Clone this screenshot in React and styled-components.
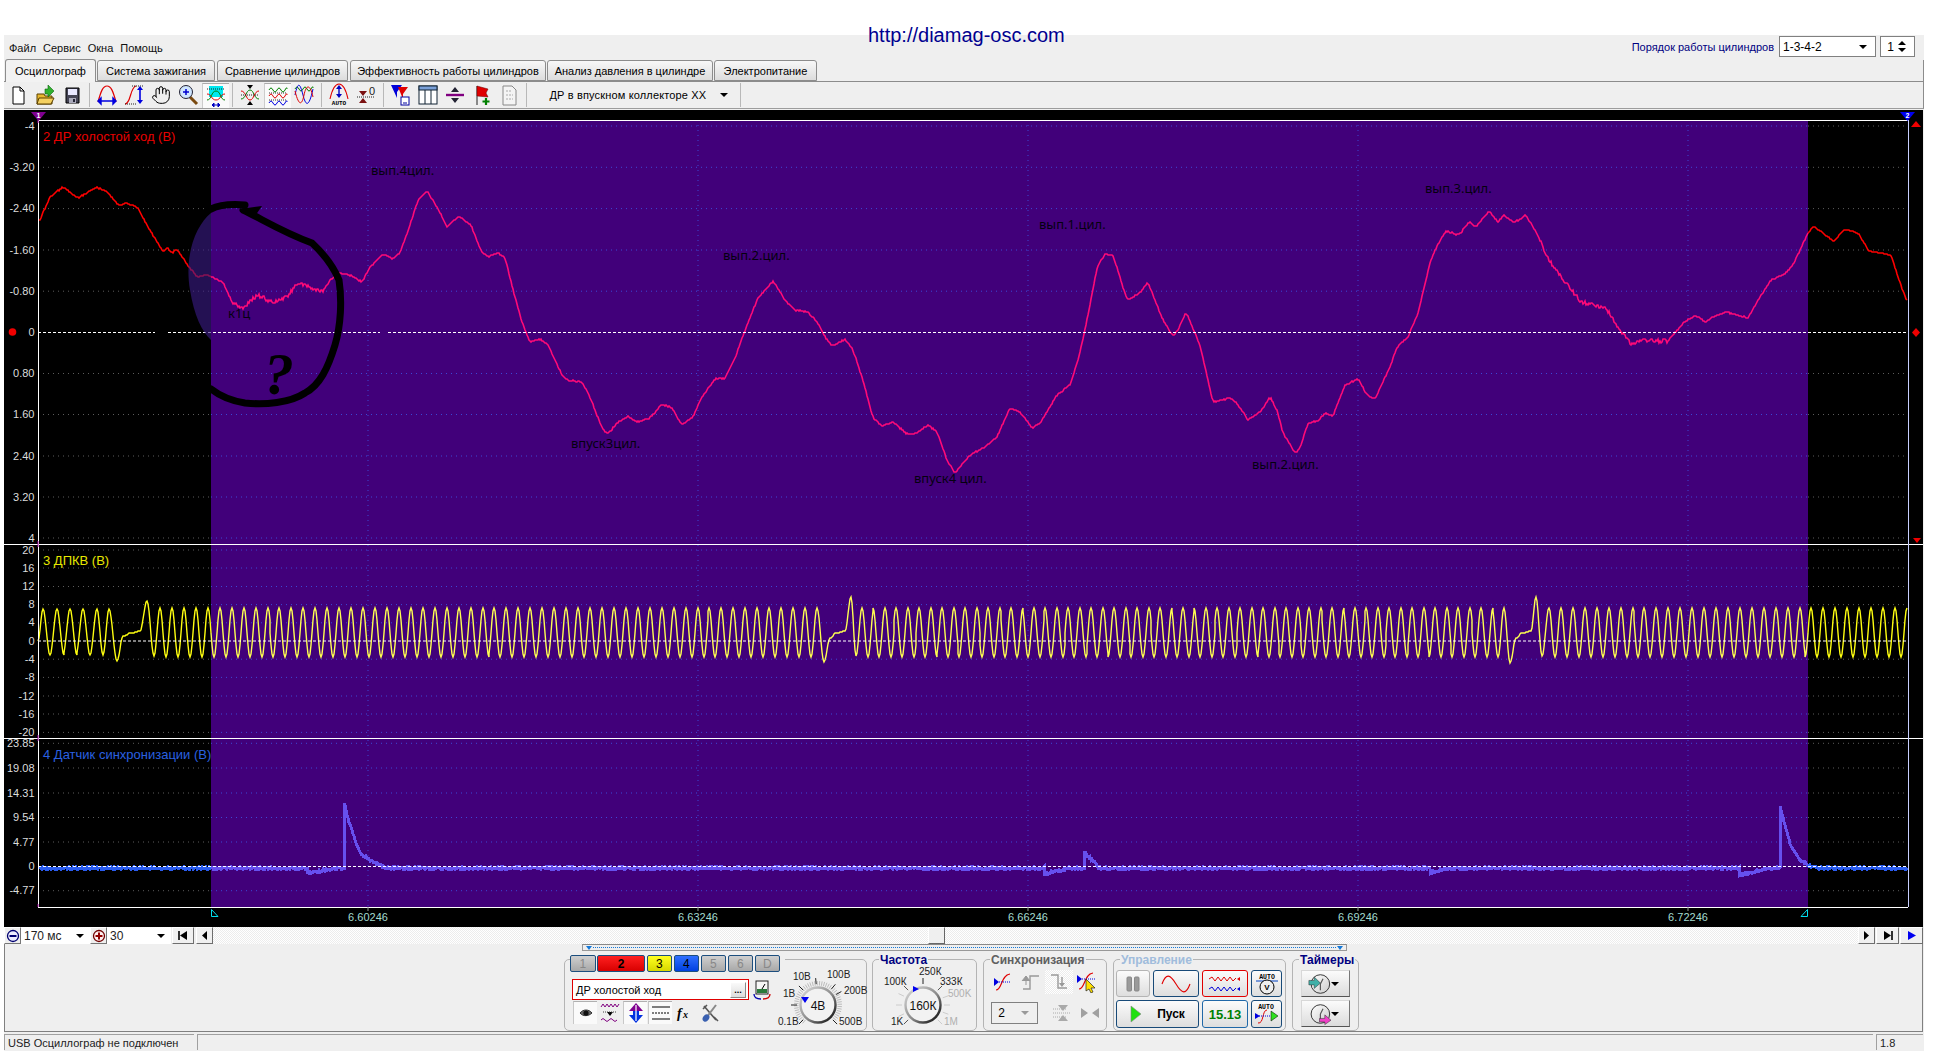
import React from 'react';
import styled, { createGlobalStyle } from 'styled-components';
import { Hand } from 'lucide-react';

const Global = createGlobalStyle`
  html, body { margin: 0; padding: 0; background: #fff; }
  body { font-family: "Liberation Sans", Arial, sans-serif; font-size: 11px; color: #000; overflow: hidden; }
  * { box-sizing: border-box; }
`;

/* ---------- trace helpers ---------- */
function makeRng(seed) {
  let s = seed;
  return () => { s = (s * 16807) % 2147483647; return s / 2147483647 - 0.5; };
}
function sampleLinear(knots) {
  const out = [];
  for (let i = 0; i < knots.length - 1; i++) {
    const [x0, y0] = knots[i]; const [x1, y1] = knots[i + 1];
    if (x1 === x0) { out.push([x0, y0]); continue; }
    for (let x = x0; x < x1; x++) out.push([x, y0 + (y1 - y0) * (x - x0) / (x1 - x0)]);
  }
  out.push(knots[knots.length - 1]);
  return out;
}
function sampleCos(knots) {
  const out = [];
  for (let i = 0; i < knots.length - 1; i++) {
    const [x0, y0] = knots[i]; const [x1, y1] = knots[i + 1];
    const n = Math.max(2, Math.round(x1 - x0));
    for (let k = 0; k < n; k++) {
      const t = k / n;
      out.push([x0 + (x1 - x0) * t, y0 + (y1 - y0) * (1 - Math.cos(Math.PI * t)) / 2]);
    }
  }
  out.push(knots[knots.length - 1]);
  return out;
}
function boxSmooth(pts, r) {
  return pts.map((p, i) => {
    let sum = 0, n = 0;
    for (let j = Math.max(0, i - r); j <= Math.min(pts.length - 1, i + r); j++) { sum += pts[j][1]; n++; }
    return [p[0], sum / n];
  });
}
const toStr = pts => pts.map(p => `${p[0]},${p[1]}`).join(' ');
const range = (pts, a, b) => pts.filter(p => p[0] >= a && p[0] <= b);

const redKnots = [[39,222],[50,197],[63,187],[78,198],[97,187],[108,193],[118,205],[126,203],[137,207],[147,225],[157,242],[163,252],[167,248],[172,253],[177,249],[187,264],[197,277],[207,275],[223,282],[232,302],[242,308],[258,295],[273,303],[287,297],[297,283],[322,292],[332,278],[340,273],[350,275],[362,282],[370,267],[383,254],[393,259],[400,253],[410,225],[418,200],[427,191],[437,207],[447,227],[459,216],[471,225],[482,253],[488,257],[498,253],[505,258],[513,290],[522,322],[530,342],[540,339],[548,345],[563,377],[567,380],[582,382],[590,397],[602,428],[608,434],[617,423],[628,416],[638,422],[650,418],[662,404],[672,408],[682,425],[693,417],[702,397],[715,379],[725,378],[735,358],[747,325],[758,298],[773,281],[785,300],[795,310],[808,312],[817,322],[827,340],[833,346],[845,339],[853,350],[862,377],[873,418],[882,426],[893,422],[907,434],[915,434],[928,425],[937,432],[947,460],[955,473],[970,455],[985,447],[997,437],[1010,408],[1020,412],[1032,428],[1040,423],[1057,395],[1070,385],[1078,360],[1085,330],[1097,268],[1105,254],[1113,255],[1127,300],[1140,293],[1148,282],[1162,318],[1173,336],[1178,330],[1186,312],[1200,345],[1213,402],[1230,398],[1237,403],[1248,420],[1262,410],[1270,397],[1277,410],[1283,433],[1295,453],[1300,448],[1308,423],[1318,421],[1325,413],[1333,416],[1345,385],[1358,379],[1367,395],[1375,399],[1390,367],[1397,347],[1408,337],[1418,313],[1430,263],[1436,248],[1446,231],[1459,235],[1469,222],[1476,227],[1489,211],[1498,222],[1504,215],[1514,223],[1526,215],[1536,232],[1549,260],[1569,287],[1581,302],[1606,308],[1618,328],[1631,344],[1641,340],[1668,341],[1684,322],[1696,316],[1706,322],[1713,317],[1726,312],[1748,318],[1758,300],[1771,280],[1786,273],[1794,263],[1808,233],[1813,226],[1834,241],[1844,229],[1858,233],[1869,251],[1891,255],[1898,277],[1907,302]];

function buildRed() {
  const rng = makeRng(12345);
  const base = boxSmooth(sampleLinear(redKnots), 1);
  return base.map(([x, y]) => {
    const amp = (x > 232 && x < 325) || (x > 1540 && x < 1670) ? 4 : 1.2;
    return [x, Math.round(y + rng() * amp)];
  });
}
function buildYellow() {
  const K = [[38, 641]];
  const hi = 608, lo = 657;
  [43, 57, 70, 83, 97, 109].forEach((p, i, a) => {
    K.push([p, hi + 1]);
    if (i < a.length - 1) K.push([(p + a[i + 1]) / 2, lo - 2]);
  });
  K.push([117, 661], [123, 636], [131, 633], [140, 631], [147, 601], [154, 656]);
  const run = (start, end, n) => {
    const per = (end - start) / n;
    for (let i = 0; i <= n; i++) {
      const p = start + per * i;
      K.push([p, hi]);
      if (i < n) K.push([p + per / 2, lo]);
    }
  };
  run(160, 817, 55);
  K.push([824, 662], [830, 638], [836, 633], [845, 631], [851, 597], [856, 656]);
  run(862, 1504, 56);
  K.push([1510, 663], [1516, 638], [1522, 633], [1531, 631], [1536, 597], [1542, 656]);
  run(1549, 1906.9, 30);
  return sampleCos(K).map(([x, y]) => [Math.round(x), Math.round(y)]);
}
function buildBlue() {
  const knots = [[38,868],[307,868],[307,873],[335,868],[344,868],[344,802],[349,822],[355,840],[360,853],[370,860],[382,866],[388,868],[1044,868],[1044,874],[1070,868],[1084,868],[1084,852],[1090,858],[1097,864],[1098,868],[1430,868],[1430,873],[1445,868],[1739,868],[1739,875],[1770,868],[1780,868],[1780,806],[1785,826],[1791,846],[1800,860],[1810,866],[1820,868],[1907,868]];
  const rng = makeRng(777);
  return sampleLinear(knots).map(([x, y]) => [x, Math.round(y + rng() * 2)]);
}
const RED = buildRed(), YEL = buildYellow(), BLU = buildBlue();

const SEL_L = 211, SEL_R = 1808, AX_L = 38, AX_R = 1908;
const GRID_X = [368, 698, 1028, 1358, 1688];
const P1 = [['-4',126],['-3.20',167.3],['-2.40',208.6],['-1.60',250],['-0.80',291.2],['0',332.5],['0.80',373.5],['1.60',414.5],['2.40',456],['3.20',497],['4',538]];
const P2 = [['20',550],['16',568],['12',586.5],['8',604.6],['4',622.8],['0',641],['-4',659.2],['-8',677.4],['-12',696],['-16',714],['-20',732.4]];
const P3 = [['23.85',743.3],['19.08',768],['14.31',793],['9.54',817.5],['4.77',842],['0',866.5],['-4.77',890.7]];
const ZEROS = [332.5, 641, 866.5];

const NOTES = [
  ['вып.4цил.', 371, 175], ['вып.2.цил.', 723, 260], ['впуск3цил.', 571, 448], ['впуск4 цил.', 914, 483],
  ['вып.1.цил.', 1039, 229], ['вып.2.цил.', 1252, 469], ['вып.3.цил.', 1425, 193], ['к1ц', 228, 318],
];

/* ---------- page structure ---------- */
const Page = styled.div`
  position: relative;
  width: 1936px;
  height: 1056px;
  padding-top: 35px;
  background: #fff;
`;
const SiteLink = styled.div`
  position: absolute;
  left: 868px;
  top: 24px;
  font-size: 20px;
  line-height: 22px;
  color: #000090;
  white-space: nowrap;
`;
const AppWindow = styled.div`
  margin-left: 4px;
  width: 1920px;
  height: 1016px;
  display: flex;
  flex-direction: column;
  background: #efefef;
`;
const TopRow = styled.div`
  height: 25px;
  display: flex;
  align-items: flex-start;
  padding: 0 9px 0 5px;
`;
const Menu = styled.nav`
  display: flex;
  gap: 7px;
  line-height: 26px;
  font-size: 11px;
  color: #111;
`;
const CylinderControls = styled.div`
  margin-left: auto;
  display: flex;
  gap: 4px;
  align-items: center;
  height: 21px;
  margin-top: 1px;
`;
const CylinderLabel = styled.span`
  color: #000080;
  font-size: 11px;
  margin-right: 1px;
`;
const SelectBox = styled.div`
  position: relative;
  width: ${p => p.$w}px;
  height: ${p => p.$h || 21}px;
  margin-left: ${p => p.$ml || 0}px;
  border: 1px solid #808080;
  background: ${p => p.$bg || '#fff'};
  color: ${p => p.$fg || '#000'};
  display: flex;
  align-items: center;
  padding: 0 3px;
  font-size: ${p => p.$fs || 11}px;
`;
const DownCaret = styled.i`
  margin-left: auto;
  margin-right: ${p => p.$mr || 5}px;
  width: 0;
  height: 0;
  border-left: 4px solid transparent;
  border-right: 4px solid transparent;
  border-top: 4px solid ${p => p.$c || '#000'};
`;
const UpCaret = styled.i`
  width: 0;
  height: 0;
  border-left: 4px solid transparent;
  border-right: 4px solid transparent;
  border-bottom: 4px solid #000;
`;
const SpinArrows = styled.span`
  margin-left: auto;
  margin-right: 5px;
  display: flex;
  flex-direction: column;
  align-items: center;
  gap: 3px;
  & > i:last-child { margin: 0; }
`;
const TabStrip = styled.div`
  height: 22px;
  display: flex;
  align-items: flex-end;
  gap: 1px;
  padding-left: 1px;
  border-bottom: 1px solid #8c8c8c;
  border-right: 1px solid #8c8c8c;
`;
const Tab = styled.div`
  width: ${p => p.$w}px;
  height: ${p => (p.$active ? 23 : 21)}px;
  margin-bottom: ${p => (p.$active ? -1 : 0)}px;
  margin-right: ${p => p.$mr || 0}px;
  display: flex;
  align-items: center;
  justify-content: center;
  border: 1px solid #8c8c8c;
  border-bottom: ${p => (p.$active ? 'none' : '1px solid #8c8c8c')};
  border-radius: 3px 3px 0 0;
  background: ${p => (p.$active ? '#f2f2f2' : 'linear-gradient(#f8f8f8, #dcdcdc)')};
  font-size: 11px;
  white-space: nowrap;
  position: relative;
`;
const Toolbar = styled.div`
  height: 27px;
  margin-bottom: 1px;
  display: flex;
  align-items: center;
  padding-left: 0.5px;
  border-bottom: 1px solid #9c9c9c;
  border-right: 1px solid #8c8c8c;
`;
const ToolButton = styled.div`
  width: 27px;
  height: 25px;
  display: flex;
  align-items: center;
  justify-content: center;
  background: ${p => (p.$on ? '#fafafa' : 'transparent')};
  border-top: ${p => (p.$on ? '1px solid #aaa' : 'none')};
  border-left: ${p => (p.$on ? '1px solid #ccc' : 'none')};
`;
const ToolSep = styled.div`
  width: 1px;
  height: 24px;
  margin: 0 3.5px;
  background: #b8b8b8;
`;
const PresetCombo = styled.div`
  width: 206px;
  display: flex;
  align-items: center;
  padding-left: 19px;
  font-size: 11px;
  letter-spacing: 0.15px;
  white-space: nowrap;
`;
const Scope = styled.svg`
  display: block;
  width: 1919px;
  height: 817px;
  background: #000;
  flex: none;
  font-family: "Liberation Sans", Arial, sans-serif;
`;
const TimeBar = styled.div`
  height: 17px;
  display: flex;
  align-items: stretch;
  flex: none;
  width: 1919px;
`;
const ZoomBtn = styled.div`
  width: 17px;
  display: flex;
  align-items: center;
  justify-content: center;
  background: #efefef;
  border: 1px solid;
  border-color: #fff #777 #777 #fff;
`;
const TimeCombo = styled.div`
  width: ${p => p.$w}px;
  background: #fff;
  display: flex;
  align-items: center;
  padding-left: 3px;
  font-size: 12px;
  color: #222;
`;
const NavBtn = styled.div`
  width: ${p => p.$w}px;
  margin-left: ${p => p.$ml || 0}px;
  display: flex;
  align-items: center;
  justify-content: center;
  background: #f0f0f0;
  border: 1px solid;
  border-color: #fff #6e6e6e #6e6e6e #fff;
`;
const Track = styled.div`
  flex: 1;
  position: relative;
  background: repeating-conic-gradient(#fff 0 25%, #ececec 0 50%) 0 0 / 2px 2px;
`;
const Thumb = styled.div`
  position: absolute;
  left: 715px;
  top: 0;
  width: 17px;
  height: 17px;
  background: #efefef;
  border: 1px solid;
  border-color: #fff #666 #666 #fff;
`;
const Deck = styled.div`
  height: 88px;
  flex: none;
  width: 1919px;
  border-left: 1px solid #808080;
  border-right: 1px solid #808080;
  border-bottom: 1px solid #808080;
  padding-left: 0;
`;
const Ruler = styled.div`
  position: relative;
  margin-left: 577px;
  width: 765px;
  height: 7px;
  border: 1px solid #999;
  border-top: 1px solid #888;
  background: linear-gradient(#efefef, #efefef);
  &::before {
    content: "";
    position: absolute;
    left: 10px; right: 10px; top: 2px;
    border-top: 1px dotted #1478d8;
  }
`;
const RulerMark = styled.i`
  position: absolute;
  top: 1px;
  ${p => (p.$right ? 'right: 3px;' : 'left: 3px;')}
  width: 0; height: 0;
  border-left: 3px solid transparent;
  border-right: 3px solid transparent;
  border-top: 4px solid #1478d8;
`;
const GroupRow = styled.div`
  display: flex;
  margin: 8px 0 0 559px;
`;
const Group = styled.div`
  position: relative;
  width: ${p => p.$w}px;
  height: 72px;
  margin-right: ${p => p.$mr || 0}px;
  border: 1px solid #b4b4b4;
  border-radius: 5px;
`;
const Legend = styled.div`
  position: absolute;
  left: 6px;
  top: -7px;
  padding: 0 1px;
  background: #efefef;
  font-size: 12px;
  line-height: 14px;
  font-weight: bold;
  color: ${p => p.$c};
  white-space: nowrap;
`;
const ChannelGroupBody = styled.div`
  display: flex;
  align-items: flex-start;
`;
const ChannelColumn = styled.div`
  width: 215px;
  margin-left: 5px;
  flex: none;
`;
const ChannelRow = styled.div`
  display: flex;
  gap: 1.5px;
  margin-top: -5px;
  background: #efefef;
`;
const ChannelBtn = styled.div`
  width: ${p => (p.$wide ? 48 : 25.5)}px;
  height: 17px;
  display: flex;
  align-items: center;
  justify-content: center;
  border: 1px solid #1c4e7e;
  border-radius: 2px;
  font-size: 12px;
  font-weight: ${p => (p.$bold ? 'bold' : 'normal')};
  color: ${p => p.$fg};
  background: linear-gradient(${p => p.$top}, ${p => p.$bot});
`;
const NameRow = styled.div`
  display: flex;
  align-items: center;
  gap: 3px;
  margin: 7px 0 0 2px;
`;
const NameInput = styled.div`
  width: 177px;
  height: 21px;
  display: flex;
  align-items: center;
  justify-content: space-between;
  padding: 0 2px 0 3px;
  background: #fff;
  border: 1px solid #e00000;
  font-size: 11px;
`;
const DotsBtn = styled.div`
  width: 16px;
  height: 16px;
  display: flex;
  align-items: center;
  justify-content: center;
  background: linear-gradient(#fafafa, #dcdcdc);
  border: 1px solid;
  border-color: #fff #888 #888 #fff;
  font-size: 9px;
  font-weight: bold;
  line-height: 8px;
`;
const DeckTools = styled.div`
  display: flex;
  gap: 1px;
  margin: 1px 0 0 3px;
`;
const DeckTool = styled.div`
  width: 24px;
  height: 23px;
  display: flex;
  align-items: center;
  justify-content: center;
  background: ${p => (p.$on ? '#fafafa' : 'transparent')};
  border-top: ${p => (p.$on ? '1px solid #b0b0b0' : 'none')};
  border-left: ${p => (p.$on ? '1px solid #c8c8c8' : 'none')};
`;
const KnobSvg = styled.svg`
  display: block;
  flex: none;
  overflow: visible;
  font-family: "Liberation Sans", Arial, sans-serif;
`;
const SyncBody = styled.div`
  padding: 10px 0 0 5px;
`;
const SyncRow = styled.div`
  display: flex;
  align-items: center;
  margin-bottom: ${p => p.$mb || 0}px;
`;
const SyncCell = styled.div`
  width: 28px;
  height: 24px;
  margin-left: ${p => p.$ml || 0}px;
  display: flex;
  align-items: center;
  justify-content: center;
  background: ${p => (p.$on ? 'repeating-conic-gradient(#fff 0 25%, #ececec 0 50%) 0 0 / 2px 2px' : 'transparent')};
`;
const ControlGrid = styled.div`
  display: grid;
  grid-template-columns: 34px 46px 46px 31px;
  grid-template-rows: 27px 28px;
  column-gap: 3px;
  row-gap: 3px;
  margin: 10px 0 0 2px;
`;
const CtlButton = styled.div`
  grid-column: ${p => p.$span || 'auto'};
  display: flex;
  align-items: center;
  justify-content: center;
  gap: ${p => p.$gap || 0}px;
  border: ${p => (p.$thin ? 1 : 1.5)}px solid ${p => p.$bc || '#184a78'};
  border-radius: 3px;
  background: linear-gradient(#fbfbfb, #dedede);
  font-size: ${p => p.$fs || 12}px;
  font-weight: bold;
  color: ${p => p.$fg || '#000'};
`;
const TimerColumn = styled.div`
  display: flex;
  flex-direction: column;
  gap: 3px;
  margin: 10px 0 0 8px;
`;
const TimerBtn = styled.div`
  width: 49px;
  height: 27px;
  display: flex;
  align-items: center;
  justify-content: space-between;
  padding: 0 5px 0 6px;
  background: linear-gradient(#fbfbfb, #dcdcdc);
  border: 1px solid;
  border-color: #d8d8d8 #777 #555 #d8d8d8;
`;
const StatusBar = styled.div`
  flex: 1;
  display: flex;
  gap: 3px;
  padding-top: 2px;
  width: 1919px;
`;
const StatusCell = styled.div`
  width: ${p => p.$w ? `${p.$w}px` : 'auto'};
  flex: ${p => (p.$w ? 'none' : 1)};
  height: 16px;
  padding: 2px 0 0 3px;
  border-top: 1px solid #a0a0a0;
  border-left: 1px solid #a0a0a0;
  font-size: 11px;
  line-height: 13px;
  color: #222;
  white-space: nowrap;
`;

/* ---------- toolbar icons ---------- */
const S = ({ w = 24, h = 24, box, children }) => (
  <svg width={w} height={h} viewBox={box || `0 0 ${w} ${h}`} fill="none">{children}</svg>
);
const IcoNew = () => <S><path d="M7 4h7l4 4v13H7z" fill="#fff" stroke="#000" /><path d="M14 4v4h4" stroke="#000" /></S>;
const IcoOpen = () => <S><path d="M4 11h7l1 2h7v8H4z" fill="#e8b830" stroke="#5a4000" /><path d="M4 21l2-6h15l-3 6z" fill="#f4d060" stroke="#5a4000" /><path d="M15 2l6 6-6 6v-3h-3V6h3z" fill="#30b030" stroke="#0a6a0a" strokeWidth=".6" /></S>;
const IcoSave = () => <S><path d="M6 5h13v15H6z" fill="#445" stroke="#000" /><rect x="8" y="6" width="9" height="6" fill="#e8e8ff" /><rect x="9" y="15" width="7" height="5" fill="#aab" /><rect x="13" y="16" width="2" height="3" fill="#223" /></S>;
const IcoPeakW = () => <S><path d="M3 19C6 8 8 3 12 3s6 5 9 16" stroke="#e00000" strokeWidth="1.2" /><path d="M3 18h18M3 18l3-3v6zM21 18l-3-3v6z" stroke="#0000e0" strokeWidth="1.4" fill="#0000e0" /></S>;
const IcoSCurve = () => <S><path d="M3 21c6 0 5-17 11-18" stroke="#e00000" strokeWidth="1.2" /><path d="M10 3h11M3 21h11" stroke="#222" strokeDasharray="1 1" /><path d="M18 5v14" stroke="#0000e0" strokeWidth="1.6" /><path d="M18 3l-3 4h6zM18 21l-3-4h6z" fill="#0000e0" /></S>;
const IcoHand = () => <Hand size={20} strokeWidth={1.2} color="#000" />;
const IcoZoom = () => <S><path d="M14 14l7 7" stroke="#7a4a10" strokeWidth="3" /><circle cx="10" cy="9" r="6.5" fill="#cfe6ff" stroke="#223" /><path d="M10 6v6M7 9h6" stroke="#0000d0" strokeWidth="1.5" /></S>;
const IcoCyan = () => <S><rect x="5" y="2" width="14" height="11" fill="#00e8f0" /><path d="M3 5h18" stroke="#222" strokeDasharray="1 1" /><path d="M3 10c5 0 4 6 9 6s4-6 9-6" stroke="#e00000" /><path d="M3 16c5 0 4-9 9-9s4 9 9 9" stroke="#008000" /><path d="M8 21h8M8 21l2-2v4zM16 21l-2-2v4z" stroke="#0000c0" fill="#0000c0" /></S>;
const IcoCross = () => <S><path d="M3 16c5 0 5-9 9-9s4 9 9 9" stroke="#008000" /><path d="M3 8c5 0 5 9 9 9s4-9 9-9" stroke="#e00000" /><path d="M12 6L9 2h6zM12 18l-3 4h6z" fill="#000" /><path d="M3 12h18" stroke="#222" strokeDasharray="1 1" /></S>;
const wave3 = y => `M3 ${y}q2-4 4 0t4 0 4 0 4 0 2-1`;
const IcoRows = () => <S><path d={wave3(6)} stroke="#008000" /><path d={wave3(12)} stroke="#e00000" /><path d={wave3(19)} stroke="#0000e0" /><path d="M3 9h18M3 16h18" stroke="#333" strokeDasharray="1 1" /></S>;
const IcoOverlay = () => <S><path d={wave3(6)} stroke="#008000" /><path d="M3 12c3-14 5-12 8 0s6 12 10-6" stroke="#0000e0" /><path d="M3 8c4 16 7 14 9 4s6-12 9 2" stroke="#e00000" /></S>;
const IcoAuto = () => <S><path d="M3 16C5 7 8 1 12 1s7 6 9 15" stroke="#e00000" strokeWidth="1.1" /><path d="M12 4v9" stroke="#0000c0" strokeWidth="1.4" /><path d="M12 2L9 6h6zM12 15l-3-4h6z" fill="#0000c0" /><text x="12" y="21.5" textAnchor="middle" fontSize="6" fontWeight="bold" fontFamily="Liberation Mono" fill="#000">AUTO</text></S>;
const IcoZero = () => <S><text x="15" y="12" fontSize="11" fontFamily="Liberation Sans" fill="#222">0</text><path d="M3 14h18" stroke="#222" strokeDasharray="1 1" /><path d="M9 13L5 8h8zM9 15l-4 5h8z" fill="#7a1010" /></S>;
const IcoFilter = () => <S><path d="M2 2h11L8 9v6z" fill="#0000d8" /><path d="M9 4h10l-5 7v5z" fill="#e00000" /><rect x="12" y="14" width="8" height="8" fill="#fff" stroke="#0000a0" /><path d="M14 20h4" stroke="#0000a0" /></S>;
const IcoTable = () => <S><rect x="3" y="3" width="18" height="18" fill="#fff" stroke="#123" /><rect x="3" y="3" width="18" height="4" fill="#7aa0d8" stroke="#123" /><path d="M9 7v14M15 7v14" stroke="#123" /></S>;
const IcoDivider = () => <S><path d="M3 12h18" stroke="#800080" strokeWidth="2.4" /><path d="M12 4l-4 5h8zM12 20l-4-5h8z" fill="#223" /></S>;
const IcoFlag = () => <S><path d="M7 3v19" stroke="#222" /><path d="M7 3l11 3-2 4 2 4-11-1z" fill="#e00000" stroke="#600" strokeWidth=".5" /><path d="M16 15v7M12.5 18.5h7" stroke="#008000" strokeWidth="2.2" /></S>;
const IcoSheet = () => <S><path d="M6 3h9l4 4v15H6z" fill="#f4f4f4" stroke="#888" /><path d="M9 8h6M9 12h7M9 16h7" stroke="#aaa" strokeDasharray="2 1" /></S>;

const IcoEye = () => <S w={14} h={10}><path d="M1 5c3-4 9-4 12 0-3 3-9 4-12 0z" fill="#666" stroke="#333" /><circle cx="7" cy="5" r="2.6" fill="#111" /></S>;
const IcoPurple = () => <S w={20} h={22}><path d="M1 5l2-3 2 3 2-3 2 3 2-3 2 3 2-3 2 3 2-3" stroke="#800080" /><path d="M1 18q2-3 4 0t4 0 4 0 4 0" stroke="#800080" /><path d="M10 14l-3-4h6z" fill="#000" /><path d="M3 10h14" stroke="#444" strokeDasharray="1 1" /></S>;
const IcoVArrows = () => <S w={20} h={22}><path d="M10 1L3 9h4v4h6V9h4z" fill="#800090" /><path d="M10 21l7-8h-4V9H7v4H3z" fill="#0030e0" /><path d="M9 3h2v16H9z" fill="#fff" opacity=".6" /></S>;
const IcoLines = () => <S w={20} h={18}><path d="M1 3h18M1 15h18" stroke="#000" /><path d="M1 9h18" stroke="#000" strokeDasharray="2 1" /></S>;
const IcoTools = () => <S w={18} h={20}><path d="M3 3l12 14" stroke="#555" strokeWidth="1.6" /><path d="M2 6l4-4M13 14l4 4" stroke="#555" strokeWidth="1.6" /><path d="M15 2L5 15" stroke="#888" strokeWidth="2" /><ellipse cx="5" cy="15" rx="3" ry="4" fill="#3a60b0" transform="rotate(35 5 15)" /></S>;
const IcoMeter = () => <S w={20} h={20}><rect x="4" y="1" width="12" height="13" fill="#f6f6f6" stroke="#222" /><rect x="5" y="9" width="10" height="4" fill="#2a7a3a" /><path d="M10 9l3-5" stroke="#000" /><path d="M2 14c0 4 3 5 7 5" stroke="#0000b0" strokeWidth="1.3" /><path d="M18 14c0 4-3 5-7 5" stroke="#d00000" strokeWidth="1.3" /></S>;
const IcoMinus = () => <S w={14} h={14}><circle cx="7" cy="7" r="5.5" fill="#eef" stroke="#000070" strokeWidth="1.3" /><path d="M3.5 7h7" stroke="#000070" strokeWidth="2" /></S>;
const IcoPlus = () => <S w={14} h={14}><circle cx="7" cy="7" r="5.5" fill="#fee" stroke="#700000" strokeWidth="1.3" /><path d="M3.5 7h7M7 3.5v7" stroke="#900000" strokeWidth="2" /></S>;
const NavFirst = () => <S w={11} h={9}><path d="M1 0v9" stroke="#000" strokeWidth="1.6" /><path d="M9 0v9L2 4.5z" fill="#000" /></S>;
const NavPrev = () => <S w={5} h={9}><path d="M5 0v9L0 4.5z" fill="#000" /></S>;
const NavNext = () => <S w={5} h={9}><path d="M0 0v9l5-4.5z" fill="#000" /></S>;
const NavLast = () => <S w={11} h={9}><path d="M10 0v9" stroke="#000" strokeWidth="1.6" /><path d="M2 0v9l7-4.5z" fill="#000" /></S>;
const NavPlay = () => <S w={8} h={9}><path d="M0 0v9l8-4.5z" fill="#0000f0" /></S>;

const SyncRise = () => <S w={20} h={20}><path d="M3 18c6 0 5-15 14-16" stroke="#e00000" strokeWidth="1.2" /><path d="M6 10h12" stroke="#0000e0" strokeDasharray="1 1" /><path d="M1 6l5 4-5 4z" fill="#0000e0" /></S>;
const SyncStepUp = () => <S w={20} h={20}><path d="M2 17h7V4h9" stroke="#999" strokeWidth="1.4" /><path d="M5 4v9M1 9l4-5 4 5" fill="#999" stroke="#999" /></S>;
const SyncStepDown = () => <S w={20} h={20}><path d="M2 3h7v13h9" stroke="#999" strokeWidth="1.4" /><path d="M13 5v7" stroke="#999" strokeWidth="1.4" /><path d="M13 15l-3-4h6z" fill="#999" /></S>;
const SyncCursor = () => <S w={22} h={22}><path d="M3 18c6 0 5-15 14-16" stroke="#e00000" strokeWidth="1.2" /><path d="M6 8h14" stroke="#0000e0" strokeDasharray="1 1" /><path d="M1 4l5 4-5 4z" fill="#0000e0" /><path d="M10 8l9 9h-4l2 4-2 1-2-4-3 2z" fill="#ffe000" stroke="#222" strokeWidth=".7" /></S>;
const SyncLevels = () => <S w={22} h={18}><path d="M2 5h14M2 9h18M2 13h14" stroke="#aaa" strokeDasharray="1 1" /><path d="M12 7L7 1h10zM12 11l-5 6h10z" fill="#aaa" /></S>;
const SyncMerge = () => <S w={20} h={12}><path d="M8 6L1 1v10zM12 6l7-5v10z" fill="#a0a0a0" /></S>;

const CtlPause = () => <S w={14} h={16}><rect x="1" y="1" width="4.5" height="14" rx="1" fill="#9a9a9a" stroke="#888" /><rect x="8.5" y="1" width="4.5" height="14" rx="1" fill="#9a9a9a" stroke="#888" /></S>;
const CtlSine = () => <S w={30} h={20}><path d="M1 10C5-1 9 0 15 10s10 11 14 0" stroke="#e00000" strokeWidth="1.1" /></S>;
const CtlDual = () => <S w={34} h={20}><path d="M1 5l3-2 3 4 3-4 3 4 3-4 3 4 3-4 3 4 3-3" stroke="#e00000" /><path d="M32 3l-3 2 3 2z" fill="#e00000" /><path d="M1 15l3-2 3 4 3-4 3 4 3-4 3 4 3-4 3 4 3-3" stroke="#0000d8" /><path d="M32 13l-3 2 3 2z" fill="#0000d8" /></S>;
const CtlAutoV = () => <S w={26} h={24} box="0 0 26 24"><text x="13" y="6.5" textAnchor="middle" fontSize="6.5" fontWeight="bold" fontFamily="Liberation Mono" fill="#000">AUTO</text><path d="M2 9h22" stroke="#0040c0" /><circle cx="13" cy="15" r="7" fill="#eee" stroke="#000" /><text x="13" y="18" textAnchor="middle" fontSize="8" fill="#000" fontFamily="Liberation Sans">V</text></S>;
const CtlAutoRun = () => <S w={26} h={24} box="0 0 26 24"><text x="12" y="6.5" textAnchor="middle" fontSize="6.5" fontWeight="bold" fontFamily="Liberation Mono" fill="#000">AUTO</text><path d="M4 21c6 1 4-13 9-13" stroke="#e00000" /><path d="M1 11l5 3-5 3z" fill="#0000e0" /><path d="M5 14h11" stroke="#0000e0" strokeDasharray="1 1" /><path d="M17 9l7 5-7 5z" fill="#30e020" stroke="#000" strokeWidth=".5" /></S>;
const PlayTri = () => <S w={12} h={18}><path d="M1 1v16l10-8z" fill="#20e010" stroke="#888" strokeWidth=".6" /></S>;
const Clock = ({ arrow }) => (
  <S w={26} h={24}>
    <defs><linearGradient id={`ck${arrow}`} x1="0" y1="0" x2="1" y2="1"><stop offset="0" stopColor="#fff" /><stop offset="1" stopColor="#ccc" /></linearGradient></defs>
    <circle cx="14" cy="12" r="10.5" fill={`url(#ck${arrow})`} stroke="#222" />
    <path d="M14 12l3-6M14 12v7" stroke="#555" strokeWidth="1.3" />
    {arrow === 'in'
      ? <path d="M1 8h6V4l7 7-7 6v-4H1z" fill="#40b0a8" stroke="#333" strokeWidth=".6" />
      : <path d="M13 17h6v-4l7 6-7 5v-3h-6z" fill="#f040c8" stroke="#333" strokeWidth=".6" />}
  </S>
);

/* ---------- knob ---------- */
const polar = (cx, cy, r, deg) => [cx + r * Math.cos(deg * Math.PI / 180), cy + r * Math.sin(deg * Math.PI / 180)];
const Knob = ({ id, cx, cy, box, w, label, labels, ticks, hatch, mark }) => (
  <KnobSvg width={w} height={70} viewBox={box}>
    <defs>
      <linearGradient id={id} x1="0" y1="0" x2="1" y2="1">
        <stop offset="0" stopColor="#ddd" /><stop offset=".55" stopColor="#888" /><stop offset="1" stopColor="#000" />
      </linearGradient>
    </defs>
    {hatch && Array.from({ length: 46 }).map((_, i) => {
      const a = 130 + i * 6;
      const [x1, y1] = polar(cx, cy, 19.5, a); const [x2, y2] = polar(cx, cy, 24, a);
      return <line key={i} x1={x1} y1={y1} x2={x2} y2={y2} stroke="#bbb" />;
    })}
    {ticks.map(([a, c], i) => {
      const [x1, y1] = polar(cx, cy, 21, a); const [x2, y2] = polar(cx, cy, 27, a);
      return <line key={i} x1={x1} y1={y1} x2={x2} y2={y2} stroke={c} />;
    })}
    <circle cx={cx} cy={cy} r={17.5} fill="#f2f2f2" stroke={`url(#${id})`} strokeWidth="2.4" />
    <path d={`M${mark[0]} ${mark[1]}l${mark[2]}`} fill="#0000f0" />
    <text x={cx} y={cy + 5} textAnchor="middle" fontSize="12" fill="#111">{label}</text>
    {labels.map(([t, x, y, c]) => <text key={t} x={x} y={y} fontSize="10" fill={c || '#222'}>{t}</text>)}
  </KnobSvg>
);

/* ---------- scope chart ---------- */
const GridLine = ({ y }) => (
  <g strokeDasharray="1 4">
    <line x1={AX_L} x2={SEL_L} y1={y} y2={y} stroke="#5c5c5c" />
    <line x1={SEL_L} x2={SEL_R} y1={y} y2={y} stroke="#3c48d4" />
    <line x1={SEL_R} x2={AX_R} y1={y} y2={y} stroke="#5c5c5c" />
  </g>
);
const AxisLabels = ({ rows }) => rows.map(([t, y]) => (
  <text key={t + y} x={34.5} y={y + 3.5} textAnchor="end" fontSize="11" fill="#dcdcdc">{t}</text>
));
const Trace = ({ pts, outer, inner, width = 1.5, render = 'crispEdges' }) => (
  <g fill="none" shapeRendering={render} strokeWidth={width}>
    <polyline points={toStr(range(pts, AX_L, SEL_L))} stroke={outer} />
    <polyline points={toStr(range(pts, SEL_L, SEL_R))} stroke={inner} />
    <polyline points={toStr(range(pts, SEL_R, AX_R))} stroke={outer} />
  </g>
);
const ChannelTitle = ({ y, c, children }) => <text x={43} y={y} fontSize="13" fill={c}>{children}</text>;

const ScopeChart = () => (
  <Scope viewBox="4 110 1919 817">
    <rect x={SEL_L} y={120} width={SEL_R - SEL_L} height={787} fill="#41007a" />
    {[...P1, ...P2, ...P3].map(([t, y]) => (t === '0' ? null : <GridLine key={t + y} y={y} />))}
    {GRID_X.map(x => <line key={x} x1={x} x2={x} y1={120} y2={907} stroke="#3c48d4" strokeDasharray="1 4" />)}

    <Trace pts={RED} outer="#ff0000" inner="#ff0a78" width={1.6} render="auto" />
    <Trace pts={YEL} outer="#ffff10" inner="#ffff50" width={1.4} render="auto" />
    <Trace pts={BLU} outer="#2a5cf0" inner="#6650ee" width={3} />

    {ZEROS.map((y, i) => (
      <g key={y} stroke="#fff" strokeDasharray="3 2">
        {i === 0 ? (
          <>
            <line x1={AX_L} x2={155} y1={y} y2={y} />
            <line x1={168} x2={380} y1={y} y2={y} />
            <line x1={388} x2={AX_R} y1={y} y2={y} />
          </>
        ) : <line x1={AX_L} x2={AX_R} y1={y} y2={y} />}
      </g>
    ))}

    <path d="M211 213C196 225 184 255 190 290 194 315 202 332 211 340z" fill="#3c1c8a" opacity=".6" />
    <path d="M211 209C219 205 232 204 245 205M243 210C262 219 282 232 312 243 326 256 334 268 339 280 342 300 341 325 335 345 328 368 320 385 305 393 290 403 265 405 245 403 232 401 220 396 211 389"
      fill="none" stroke="#000" strokeWidth="7" strokeLinecap="round" />
    <path d="M240 209L262 206 255 216z" fill="#000" />
    <text x="264" y="394" fontFamily="Liberation Serif" fontWeight="bold" fontStyle="italic" fontSize="60" fill="#000">?</text>

    {NOTES.map(([t, x, y]) => <text key={t + x} x={x} y={y} fontFamily="Noto Sans" fontSize="13" fill="#050010">{t}</text>)}

    <ChannelTitle y={141} c="#e80000">2 ДР холостой ход (В)</ChannelTitle>
    <ChannelTitle y={565} c="#e8e800">3 ДПКВ (В)</ChannelTitle>
    <ChannelTitle y={759} c="#2a60e0">4 Датчик синхронизации (В)</ChannelTitle>

    <AxisLabels rows={P1} /><AxisLabels rows={P2} /><AxisLabels rows={P3} />

    <g stroke="#fff">
      <line x1={AX_L} x2={AX_R} y1={120.5} y2={120.5} />
      <line x1={4} x2={1923} y1={544.5} y2={544.5} />
      <line x1={4} x2={1923} y1={738.5} y2={738.5} />
      <line x1={AX_L} x2={AX_R} y1={907.5} y2={907.5} />
      <line x1={38.5} x2={38.5} y1={120} y2={907} />
      <line x1={1908.5} x2={1908.5} y1={120} y2={907} stroke="#c8d0ff" />
    </g>
    <path d="M38 120v3M38 541v6M38 735v6M38 904v3" stroke="#a000a0" />

    <path d="M31 112h15l-7.5 9z" fill="#800090" />
    <text x="38.5" y="118" textAnchor="middle" fontSize="7" fontWeight="bold" fill="#fff">1</text>
    <path d="M1900 112h15l-7.5 9z" fill="#0000f0" />
    <text x="1907.5" y="118" textAnchor="middle" fontSize="7" fontWeight="bold" fill="#fff">2</text>
    <path d="M1916 121l5 6h-10z" fill="#f00000" />
    <path d="M1917 543l-4-5h8z" fill="#f00000" />
    <circle cx="12.5" cy="332" r="3.8" fill="#f00000" />
    <path d="M1916 328l4 4.5-4 4.5-4-4.5z" fill="#f00000" />

    <path d="M211.5 909.5v7h6.5z" fill="none" stroke="#00e0f0" />
    <path d="M1807.5 909.5v7h-6.5z" fill="none" stroke="#00e0f0" />
    {GRID_X.map((x, i) => (
      <g key={x}>
        <line x1={x} x2={x} y1={907} y2={911} stroke="#999" />
        <text x={x} y={920.5} textAnchor="middle" fontSize="11" fill="#a4dcd0">{`6.${60246 + i * 3000}`}</text>
      </g>
    ))}
  </Scope>
);

const TABS = [
  ['Осциллограф', 91, 0, true], ['Система зажигания', 118, 1], ['Сравнение цилиндров', 131, 1],
  ['Эффективность работы цилиндров', 196, 0], ['Анализ давления в цилиндре', 166, 0], ['Электропитание', 103, 0],
];
const CHANNELS = [
  ['1', 0, '#888', '#cfcfcf', '#a8a8a8'], ['2', 1, '#000', '#ff2020', '#d80000', true],
  ['3', 0, '#000', '#ffff20', '#d8d800'], ['4', 0, '#000', '#3070ff', '#0040e0'],
  ['5', 0, '#888', '#cfcfcf', '#a8a8a8'], ['6', 0, '#888', '#cfcfcf', '#a8a8a8'], ['D', 0, '#888', '#cfcfcf', '#a8a8a8'],
];

export default function App() {
  return (
    <Page>
      <Global />
      <SiteLink>http://diamag-osc.com</SiteLink>
      <AppWindow>
        <TopRow>
          <Menu>
            <span>Файл</span><span>Сервис</span><span>Окна</span><span>Помощь</span>
          </Menu>
          <CylinderControls>
            <CylinderLabel>Порядок работы цилиндров</CylinderLabel>
            <SelectBox $w={97} $fs={12}>1-3-4-2<DownCaret /></SelectBox>
            <SelectBox $w={35} $fs={12}>&nbsp;1<SpinArrows><UpCaret /><DownCaret $mr={0} /></SpinArrows></SelectBox>
          </CylinderControls>
        </TopRow>
        <TabStrip>
          {TABS.map(([t, w, mr, a]) => <Tab key={t} $w={w} $mr={mr} $active={a}>{t}</Tab>)}
        </TabStrip>
        <Toolbar>
          <ToolButton><IcoNew /></ToolButton><ToolButton><IcoOpen /></ToolButton><ToolButton><IcoSave /></ToolButton>
          <ToolSep />
          <ToolButton><IcoPeakW /></ToolButton><ToolButton><IcoSCurve /></ToolButton><ToolButton><IcoHand /></ToolButton><ToolButton><IcoZoom /></ToolButton><ToolButton $on><IcoCyan /></ToolButton>
          <ToolSep />
          <ToolButton><IcoCross /></ToolButton><ToolButton $on><IcoRows /></ToolButton><ToolButton><IcoOverlay /></ToolButton>
          <ToolSep />
          <ToolButton><IcoAuto /></ToolButton><ToolButton><IcoZero /></ToolButton>
          <ToolSep />
          <ToolButton><IcoFilter /></ToolButton><ToolButton><IcoTable /></ToolButton><ToolButton><IcoDivider /></ToolButton><ToolButton><IcoFlag /></ToolButton><ToolButton><IcoSheet /></ToolButton>
          <ToolSep />
          <PresetCombo>ДР в впускном коллекторе XX<DownCaret $mr={9} /></PresetCombo>
          <ToolSep />
        </Toolbar>
        <ScopeChart />
        <TimeBar>
          <ZoomBtn><IcoMinus /></ZoomBtn>
          <TimeCombo $w={69}>170 мс<DownCaret $mr={6} /></TimeCombo>
          <ZoomBtn><IcoPlus /></ZoomBtn>
          <TimeCombo $w={64}>30<DownCaret $mr={6} /></TimeCombo>
          <NavBtn $w={22} $ml={1}><NavFirst /></NavBtn>
          <NavBtn $w={17} $ml={2}><NavPrev /></NavBtn>
          <Track><Thumb /></Track>
          <NavBtn $w={17}><NavNext /></NavBtn>
          <NavBtn $w={23} $ml={1}><NavLast /></NavBtn>
          <NavBtn $w={23} $ml={1}><NavPlay /></NavBtn>
        </TimeBar>
        <Deck>
          <Ruler><RulerMark /><RulerMark $right /></Ruler>
          <GroupRow>
            <Group $w={303} $mr={5}>
              <ChannelGroupBody>
                <ChannelColumn>
                  <ChannelRow>
                    {CHANNELS.map(([t, wide, fg, top, bot, bold]) => (
                      <ChannelBtn key={t} $wide={!!wide} $fg={fg} $top={top} $bot={bot} $bold={bold}>{t}</ChannelBtn>
                    ))}
                  </ChannelRow>
                  <NameRow>
                    <NameInput>ДР холостой ход<DotsBtn>...</DotsBtn></NameInput>
                    <IcoMeter />
                  </NameRow>
                  <DeckTools>
                    <DeckTool $on><IcoEye /></DeckTool>
                    <DeckTool><IcoPurple /></DeckTool>
                    <DeckTool $on><IcoVArrows /></DeckTool>
                    <DeckTool $on><IcoLines /></DeckTool>
                    <DeckTool><S w={20} h={18}><text x="2" y="14" fontFamily="Liberation Serif" fontStyle="italic" fontWeight="bold" fontSize="14" fill="#000">f</text><text x="8" y="14" fontFamily="Liberation Serif" fontStyle="italic" fontWeight="bold" fontSize="10" fill="#000">x</text></S></DeckTool>
                    <DeckTool><IcoTools /></DeckTool>
                  </DeckTools>
                </ChannelColumn>
                <Knob id="kv" cx={818} cy={1005} box="785 960 81 70" w={81} label="4В" hatch
                  mark={[801, 997, '8 0-4 6z']}
                  ticks={[[135, '#222'], [180, '#222'], [225, '#222'], [265, '#222'], [310, '#222'], [330, '#222'], [45, '#222']]}
                  labels={[['10В', 793, 980], ['100В', 827, 978], ['1В', 783, 997], ['200В', 844, 994], ['0.1В', 778, 1025], ['500В', 839, 1025]]} />
              </ChannelGroupBody>
            </Group>
            <Group $w={105} $mr={6}>
              <Legend $c="#000080">Частота</Legend>
              <Knob id="kf" cx={923} cy={1005} box="873 960 103 70" w={103} label="160К"
                mark={[913, 986, '0 6 6-3z']}
                ticks={[[135, '#555'], [155, '#ccc'], [180, '#ccc'], [205, '#ccc'], [225, '#555'], [270, '#222'], [315, '#555'], [340, '#ccc'], [0, '#ccc'], [20, '#ccc'], [45, '#ccc']]}
                labels={[['100К', 884, 985], ['250К', 919, 975], ['333К', 940, 985], ['500K', 948, 997, '#b0b0b0'], ['1K', 891, 1025], ['1M', 944, 1025, '#b0b0b0']]} />
            </Group>
            <Group $w={124} $mr={6}>
              <Legend $c="#606060">Синхронизация</Legend>
              <SyncBody>
                <SyncRow $mb={7}>
                  <SyncCell><SyncRise /></SyncCell><SyncCell><SyncStepUp /></SyncCell>
                  <SyncCell $on><SyncStepDown /></SyncCell><SyncCell><SyncCursor /></SyncCell>
                </SyncRow>
                <SyncRow>
                  <SelectBox $w={47} $h={22} $ml={2} $bg="transparent" $fs={12}>&nbsp;2<DownCaret $c="#999" /></SelectBox>
                  <SyncCell $ml={10}><SyncLevels /></SyncCell><SyncCell><SyncMerge /></SyncCell>
                </SyncRow>
              </SyncBody>
            </Group>
            <Group $w={173} $mr={6}>
              <Legend $c="#a0bcdc">Управление</Legend>
              <ControlGrid>
                <CtlButton $bc="#b4b4b4" $thin><CtlPause /></CtlButton>
                <CtlButton><CtlSine /></CtlButton>
                <CtlButton $bc="#e00000"><CtlDual /></CtlButton>
                <CtlButton><CtlAutoV /></CtlButton>
                <CtlButton $span="span 2" $gap={15}><PlayTri />Пуск</CtlButton>
                <CtlButton $bc="#2068a8" $fg="#008000" $fs={13}>15.13</CtlButton>
                <CtlButton><CtlAutoRun /></CtlButton>
              </ControlGrid>
            </Group>
            <Group $w={67}>
              <Legend $c="#000080">Таймеры</Legend>
              <TimerColumn>
                <TimerBtn><Clock arrow="in" /><DownCaret $mr={0} /></TimerBtn>
                <TimerBtn><Clock arrow="out" /><DownCaret $mr={0} /></TimerBtn>
              </TimerColumn>
            </Group>
          </GroupRow>
        </Deck>
        <StatusBar>
          <StatusCell $w={190}>USB Осциллограф не подключен</StatusCell>
          <StatusCell />
          <StatusCell $w={47}>1.8</StatusCell>
        </StatusBar>
      </AppWindow>
    </Page>
  );
}
